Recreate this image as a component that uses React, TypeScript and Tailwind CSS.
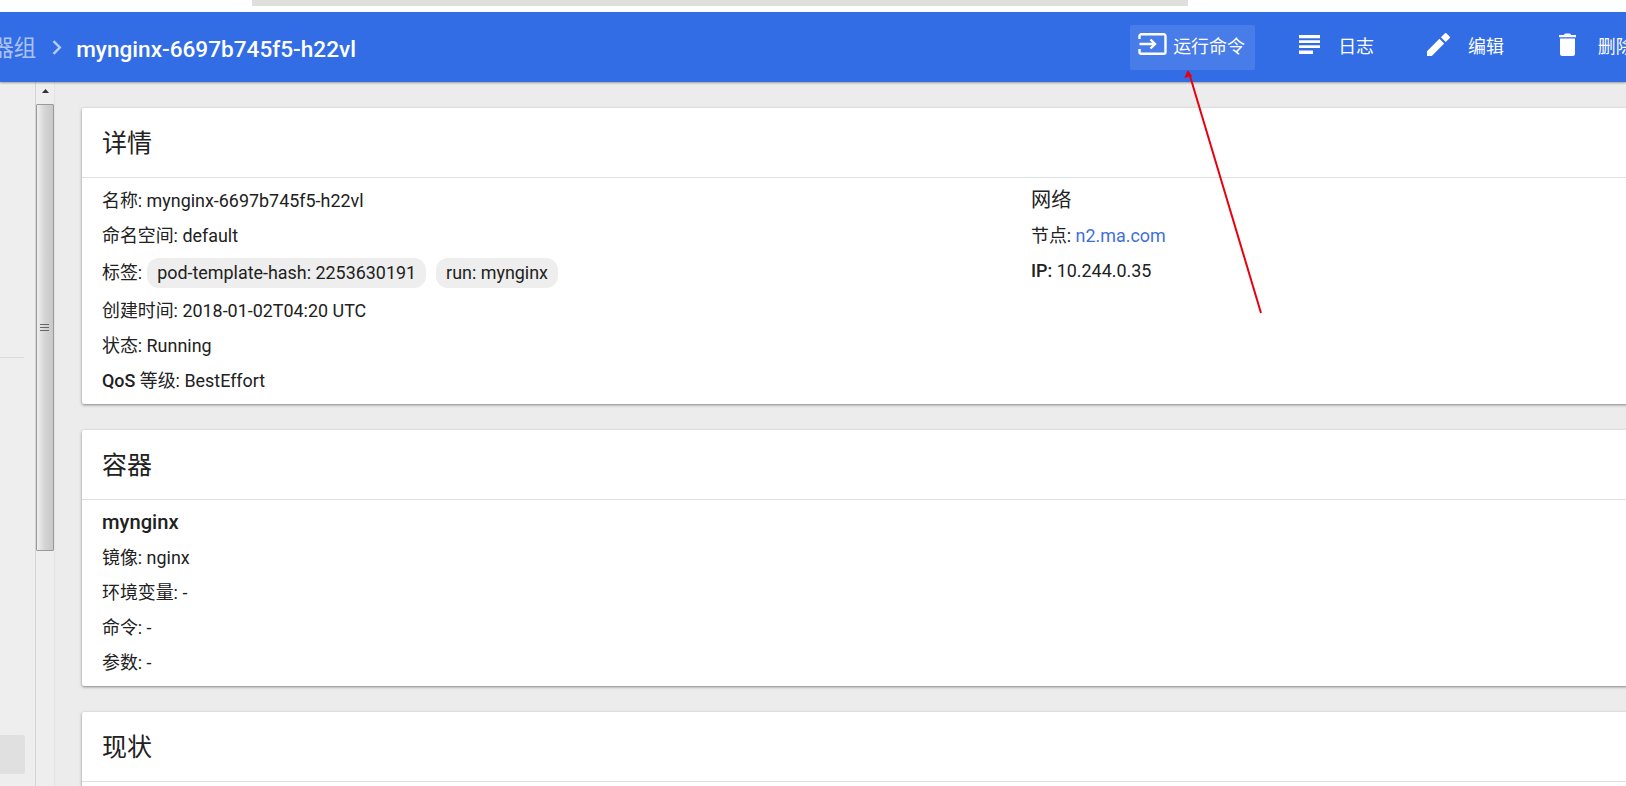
import React from "react";

const Row = ({ children }: { children: React.ReactNode }) => (
  <div className="h-[35px] flex items-center text-[17.92px] text-[#212121] leading-none whitespace-nowrap">{children}</div>
);

const Card = ({ title, children, className }: { title: string; children?: React.ReactNode; className: string }) => (
  <section className={`bg-white rounded-[2px] shadow-[0_1px_3px_rgba(0,0,0,0.45)] ${className}`}>
    <h2 className="h-[70px] flex items-center px-[20px] pt-[2px] text-[25px] font-normal text-[#212121] border-b border-[#dfdfdf]">{title}</h2>
    {children}
  </section>
);

const Action = ({ icon, label, className }: { icon: React.ReactNode; label: string; className: string }) => (
  <div className={`flex items-center h-[45px] mt-px text-white text-[17.92px] shrink-0 ${className}`}>
    {icon}
    <span className="shrink-0">{label}</span>
  </div>
);

export default function App() {
  return (
    <div className="relative w-[1626px] h-[786px] overflow-hidden bg-white flex flex-col font-['Roboto','Noto_Sans_CJK_SC',sans-serif]">
      <div className="h-3 shrink-0 bg-white">
        <div className="ml-[252px] w-[936px] h-[6px] bg-[#dfdfdc]" />
      </div>
      <header className="h-[70px] shrink-0 bg-[#326de6] flex items-center shadow-[0_1px_2px_rgba(0,0,0,0.35)] z-10 whitespace-nowrap">
        <span className="text-[22.4px] text-white/60 ml-[-31px] shrink-0 pt-[4px]">容器组</span>
        <svg width="10" height="15" viewBox="0 0 10 15" className="ml-[16px] mr-[14px] shrink-0" fill="none" stroke="rgba(255,255,255,0.65)" strokeWidth="2.400"><path d="M1.500 1.200 7.800 7.500 1.500 13.800" /></svg>
        <span className="text-[22.6px] font-medium text-white w-[1054px] shrink-0 pt-[6px]">mynginx-6697b745f5-h22vl</span>
        <Action
          className="w-[125px] pl-[8px] bg-white/10 rounded-[2px] gap-[6px]"
          label="运行命令"
          icon={<svg width="29" height="22" viewBox="0 0 29 22" fill="none" stroke="white" strokeWidth="2.400" className="shrink-0 mb-[7px]"><path d="M1.500 6V3A1.800 1.800 0 0 1 3.300 1.200h22.400A1.800 1.800 0 0 1 27.500 3v16a1.800 1.800 0 0 1-1.800 1.800H3.300A1.800 1.800 0 0 1 1.500 19v-3" /><path d="M1.500 11h15M12.500 6.500 17 11l-4.500 4.500" /></svg>}
        />
        <Action
          className="ml-[44px] gap-[18px]"
          label="日志"
          icon={<svg width="21" height="19" viewBox="0 0 21 19" fill="white" className="shrink-0 mb-[7px]"><path d="M0 0h21v3.200H0zM0 5.300h21v2.800H0zM0 10.200h21v2.800H0zM0 15.500h14V19H0z" /></svg>}
        />
        <Action
          className="ml-[53px] gap-[18px]"
          label="编辑"
          icon={<svg width="23" height="23" viewBox="0 0 23 23" fill="white" className="shrink-0 mb-[7px]"><path d="M0 18.200V23h4.800L17.200 10.500l-4.800-4.800zM22.600 5.200a1.300 1.300 0 0 0 0-1.800L19.600.4a1.300 1.300 0 0 0-1.800 0l-3.900 3.900 4.800 4.800z" /></svg>}
        />
        <Action
          className="ml-[55px] gap-[22px]"
          label="删除"
          icon={<svg width="17" height="23" viewBox="0 0 17 23" fill="white" className="shrink-0 mb-[7px]"><path d="M1 5.500h15v15a2.500 2.500 0 0 1-2.500 2.500h-10A2.500 2.500 0 0 1 1 20.500zM0 2h4.800L6 .5h5L12.200 2H17v2.300H0z" /></svg>}
        />
      </header>

      <div className="flex-1 flex min-h-0">
        <aside className="w-[36px] shrink-0 bg-[#eeeeee] border-r border-[#d4d4d4] flex flex-col">
          <div className="mt-[275px] w-6 h-px bg-[#dcdcdc]" />
          <div className="mt-[377px] w-[25px] h-[39px] bg-[#e0e0e0] rounded-r-[3px]" />
        </aside>
        <div className="w-[19px] shrink-0 bg-[#eeeeee] flex flex-col items-center border-r border-[#e3e3e3]">
          <svg width="9" height="6" viewBox="0 0 9 6" className="mt-[6px] mb-[10px]"><path d="M4.500 1 8 5H1z" fill="#333" /></svg>
          <div className="w-[18px] h-[447px] bg-gradient-to-r from-[#efefef] via-[#d4d4d4] to-[#c8c8c8] border border-[#9a9a9a] rounded-[1px] flex items-center justify-start pl-[3px]">
            <svg width="9" height="9" viewBox="0 0 9 9" stroke="#666" strokeWidth="1"><path d="M0 1.500h9M0 4.500h9M0 7.500h9" /></svg>
          </div>
        </div>
        <main className="flex-1 min-w-0 bg-[#edecec] pl-[27px] pt-[26px]">
          <Card title="详情" className="w-[1600px] h-[296px]">
            <div className="flex pt-[5px] pl-[20px]">
              <div className="w-[929px]">
                <Row>名称:&nbsp;mynginx-6697b745f5-h22vl</Row>
                <Row>命名空间:&nbsp;default</Row>
                <div className="h-[38px] mt-px mb-px flex items-center text-[17.92px] text-[#212121] whitespace-nowrap">
                  标签:
                  <span className="ml-[5px] h-[30px] flex items-center px-[10px] rounded-[12px] bg-[#eeeeee]">pod-template-hash: 2253630191</span>
                  <span className="ml-[10px] h-[30px] flex items-center px-[10px] rounded-[12px] bg-[#eeeeee]">run: mynginx</span>
                </div>
                <Row>创建时间:&nbsp;2018-01-02T04:20 UTC</Row>
                <Row>状态:&nbsp;Running</Row>
                <Row><b className="font-medium">QoS</b>&nbsp;等级:&nbsp;BestEffort</Row>
              </div>
              <div>
                <div className="h-[35px] flex items-center text-[20.16px] text-[#212121]">网络</div>
                <Row>节点:&nbsp;<a className="text-[#3f6fd9]">n2.ma.com</a></Row>
                <Row><b className="font-medium">IP:</b>&nbsp;10.244.0.35</Row>
              </div>
            </div>
          </Card>
          <Card title="容器" className="w-[1600px] h-[256px] mt-[26px]">
            <div className="pt-[5px] pl-[20px]">
              <div className="h-[35px] flex items-center text-[20.16px] font-medium text-[#212121]">mynginx</div>
              <Row>镜像:&nbsp;nginx</Row>
              <Row>环境变量:&nbsp;-</Row>
              <Row>命令:&nbsp;-</Row>
              <Row>参数:&nbsp;-</Row>
            </div>
          </Card>
          <Card title="现状" className="w-[1600px] h-[200px] mt-[26px]" />
        </main>
      </div>

      <svg className="absolute left-0 top-0 pointer-events-none z-20" width="1626" height="786" fill="none">
        <path d="M1261 313 1190 76" stroke="#e8000f" strokeWidth="2" />
        <path d="M1188 71.500l-2.500 5.500 5.500-1.200z" fill="#e8000f" stroke="#e8000f" strokeWidth="1.500" />
      </svg>
    </div>
  );
}
